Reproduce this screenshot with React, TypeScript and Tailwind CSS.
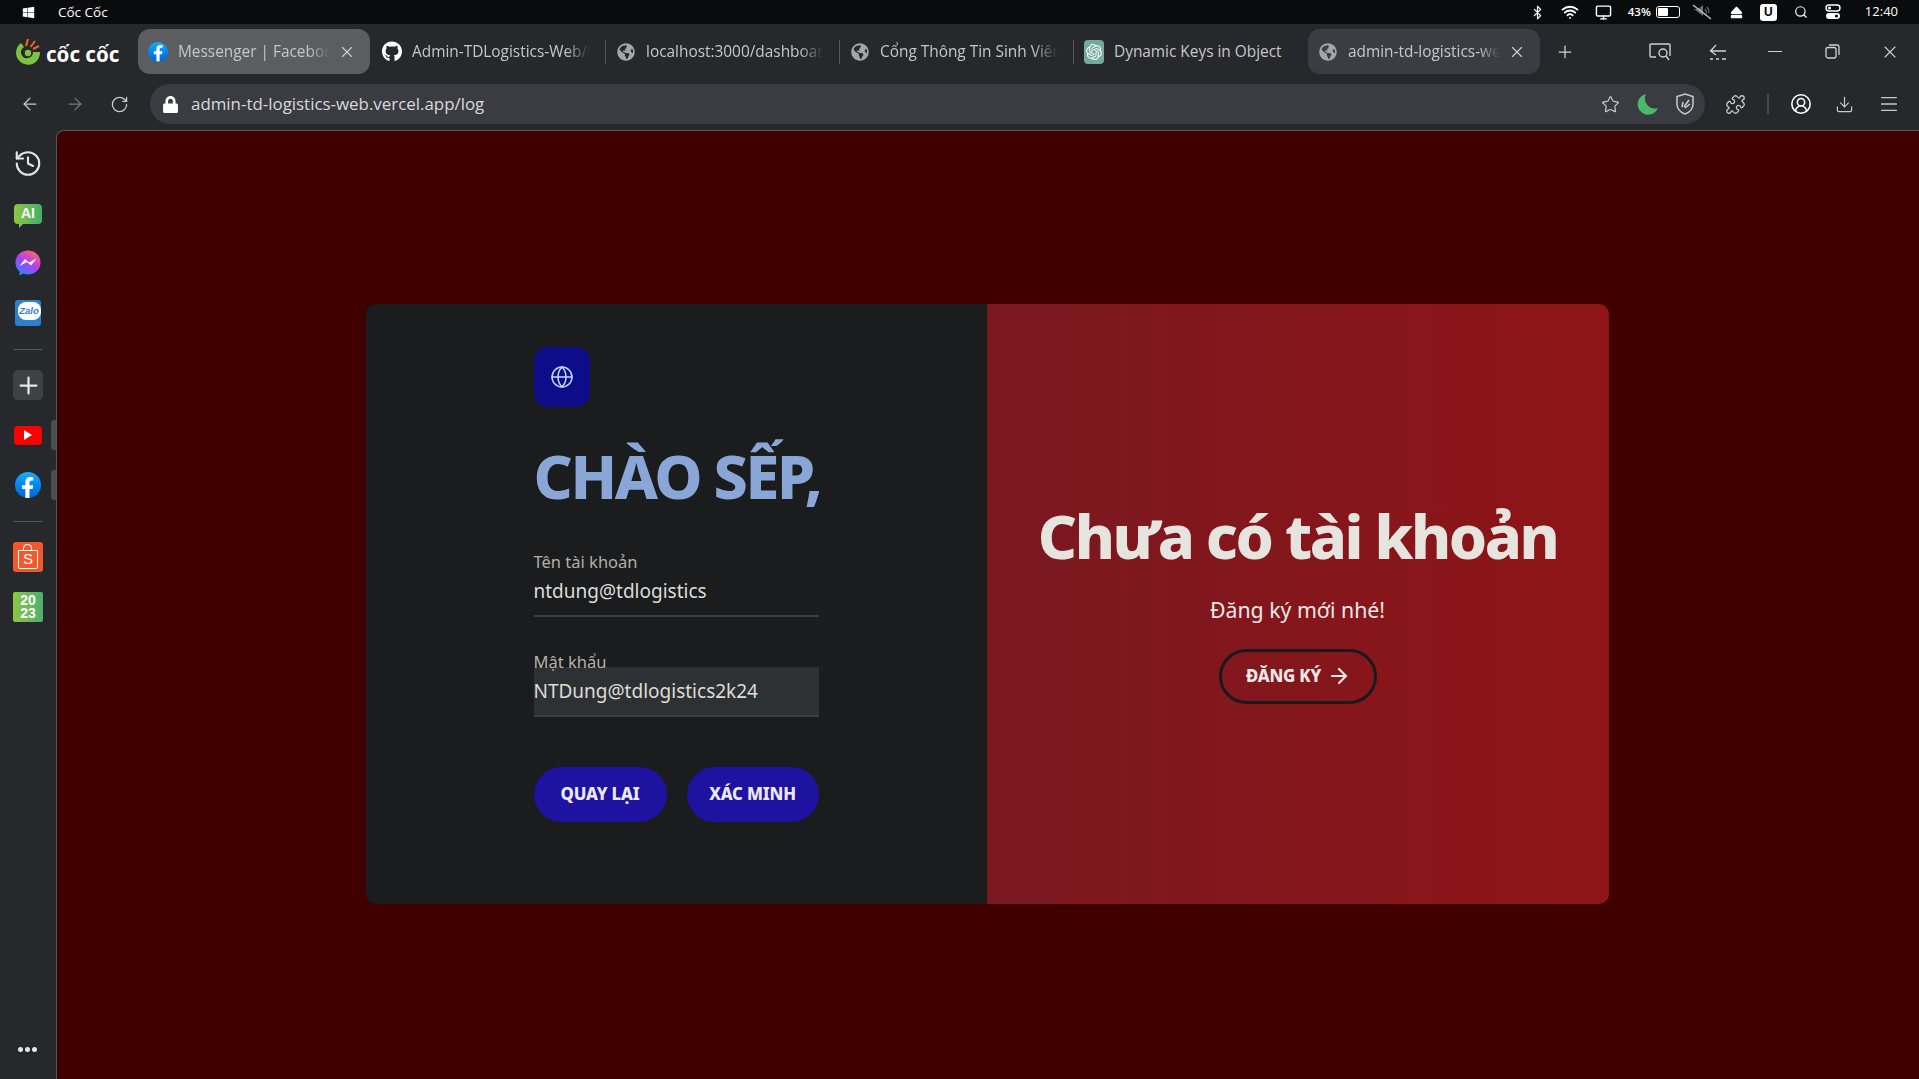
import React from "react";
import { ArrowLeft, ArrowRight, RotateCw, Star, Puzzle, CircleUserRound, Download, Menu, X, Plus, Globe, History, Bluetooth, Wifi, Monitor, Search } from "lucide-react";
import { FaGithub, FaGlobeAmericas, FaLock, FaWindows, FaEject, FaFacebookF } from "react-icons/fa";
import { SiOpenai } from "react-icons/si";

const ui = "font-['Open_Sans',sans-serif]";

function FbIcon({ size = 20 }: { size?: number }) {
  return (
    <span className="flex items-end justify-center rounded-full overflow-hidden bg-gradient-to-b from-[#18acfe] to-[#0163e0] shrink-0" style={{ width: size, height: size }}>
      <FaFacebookF className="text-white" size={size * 0.82} />
    </span>
  );
}

function CocLogo() {
  return (
    <div className="w-[138px] shrink-0 flex items-center pl-[15px] gap-[5px] relative">
      <svg width="26" height="28" viewBox="0 0 26 28">
        <path d="M6 5 A12 12 0 1 0 25 14 L18 14 A6 6 0 1 1 9 9 Z" fill="#7fc241" />
        <circle cx="13" cy="15" r="3.2" fill="#7fc241" />
        <path d="M11 8 L13 1" stroke="#e8672c" strokeWidth="2.2" />
        <path d="M15.5 9 L20 3" stroke="#e8672c" strokeWidth="2" />
        <path d="M18 11 L24 8" stroke="#e8672c" strokeWidth="2" />
      </svg>
      <span className="font-['Noto_Sans',sans-serif] font-bold text-[20.5px] leading-none text-white mt-[6px] whitespace-nowrap">cốc cốc</span>
    </div>
  );
}

function Tab({ icon, title, active, selected, fade, close }: { icon: React.ReactNode; title: string; active?: boolean; selected?: boolean; fade?: boolean; close?: boolean }) {
  const bg = active ? "bg-[#5c5d61]" : selected ? "bg-[#3b3d42]" : "";
  return (
    <div className={`w-[232px] h-[45px] shrink-0 rounded-[12px] flex items-center pl-[10px] pr-[14px] ${bg}`}>
      <span className="w-[20px] h-[20px] flex items-center justify-center shrink-0">{icon}</span>
      <span className={`ml-[10px] flex-1 overflow-hidden whitespace-nowrap text-[15.4px] text-[#c6c7c9] ${ui} ${fade ? "[mask-image:linear-gradient(to_right,black_86%,transparent_100%)]" : ""}`}>{title}</span>
      {close ? <X size={18} strokeWidth={1.5} className="ml-[8px] text-[#d0d1d3] shrink-0" /> : null}
    </div>
  );
}

function TabGap({ line }: { line?: boolean }) {
  return (
    <div className="w-[2px] shrink-0 flex items-center justify-center">
      {line ? <span className="w-[1px] h-[24px] bg-[#55575a]" /> : null}
    </div>
  );
}

function TopBar() {
  return (
    <div className="h-[24px] shrink-0 bg-[#0a0b0c] flex items-center text-white">
      <FaWindows size={13} className="ml-[22px] text-white" />
      <span className={`ml-[23px] text-[13.5px] ${ui}`}>Cốc Cốc</span>
      <div className="ml-auto flex items-center pr-[21px]">
        <span className="w-[33px] flex justify-center"><Bluetooth size={15} strokeWidth={2} /></span>
        <span className="w-[33px] flex justify-center"><Wifi size={18} strokeWidth={2.4} /></span>
        <span className="w-[33px] flex justify-center"><Monitor size={17} strokeWidth={2} /></span>
        <span className={`ml-[8px] text-[11.5px] font-semibold ${ui}`}>43%</span>
        <span className="ml-[5px] w-[24px] h-[12px] rounded-[3px] border border-white flex p-[1px]">
          <span className="w-[10px] h-full bg-white rounded-[1px]" />
        </span>
        <span className="w-[44px] flex justify-center">
          <svg width="20" height="16" viewBox="0 0 20 16">
            <path d="M2 5 H6 L11 1 V12 Z" fill="#6c6d6f" />
            <path d="M13 5 A5 5 0 0 1 14 10 M15 3 A8 8 0 0 1 17 9" stroke="#6c6d6f" strokeWidth="1.2" fill="none" />
            <path d="M1 1 L19 15" stroke="#c9cacb" strokeWidth="1.2" />
          </svg>
        </span>
        <span className="w-[26px] flex justify-center"><FaEject size={13} /></span>
        <span className="ml-[10px] w-[17px] h-[17px] rounded-[3px] bg-white text-black text-[12px] font-bold flex items-center justify-center font-['Liberation_Sans',sans-serif]">U</span>
        <span className="w-[48px] flex justify-center"><Search size={14} strokeWidth={2} /></span>
        <svg width="16" height="16" viewBox="0 0 16 16">
          <rect x="1" y="1" width="14" height="6" rx="3" fill="none" stroke="white" strokeWidth="1.4" />
          <circle cx="4.5" cy="4" r="1.6" fill="white" />
          <rect x="1" y="9" width="14" height="6" rx="3" fill="white" />
          <circle cx="11.5" cy="12" r="1.6" fill="#0a0b0c" />
        </svg>
        <span className={`ml-[24px] text-[13px] ${ui}`}>12:40</span>
      </div>
    </div>
  );
}

function TabStrip() {
  const globe = <FaGlobeAmericas size={18} className="text-[#a4a6a9]" />;
  const cell = "w-[57.5px] flex justify-center shrink-0";
  return (
    <div className="h-[60px] shrink-0 bg-[#26282b] flex items-center pb-[5px]">
      <CocLogo />
      <Tab active fade close icon={<FbIcon />} title="Messenger | Facebook" />
      <TabGap />
      <Tab fade icon={<FaGithub size={21} className="text-white" />} title="Admin-TDLogistics-Web/Client" />
      <TabGap line />
      <Tab fade icon={globe} title="localhost:3000/dashboard/main" />
      <TabGap line />
      <Tab fade icon={globe} title="Cổng Thông Tin Sinh Viên" />
      <TabGap line />
      <Tab
        icon={
          <span className="w-[20px] h-[24px] rounded-[4px] bg-[#74aa9c] flex items-center justify-center">
            <SiOpenai size={16} className="text-white" />
          </span>
        }
        title="Dynamic Keys in Object"
      />
      <TabGap />
      <Tab selected fade close icon={globe} title="admin-td-logistics-web" />
      <Plus size={20} strokeWidth={1.5} className="ml-[15px] text-[#d0d1d3]" />
      <div className="ml-auto flex items-center text-[#d0d1d3]">
        <span className={cell}>
          <svg width="22" height="20" viewBox="0 0 22 20" fill="none" stroke="currentColor" strokeWidth="1.4">
            <path d="M7 15 H2 a1 1 0 0 1 -1 -1 V3 a1 1 0 0 1 1 -1 H20 a1 1 0 0 1 1 1 V14" />
            <circle cx="14" cy="11" r="4" />
            <path d="M17 14 L20 18" />
          </svg>
        </span>
        <span className={cell}>
          <svg width="18" height="18" viewBox="0 0 18 18" fill="none" stroke="currentColor" strokeWidth="1.3">
            <path d="M17 8 H2 M7 2 L1.5 8 L7 12" />
            <path d="M1 16 H4 M7 16 H10 M13 16 H17" />
          </svg>
        </span>
        <span className={cell}><span className="w-[14px] h-[1.5px] bg-current" /></span>
        <span className={cell}>
          <svg width="15" height="15" viewBox="0 0 15 15" fill="none" stroke="currentColor" strokeWidth="1.3">
            <rect x="1" y="3.5" width="10" height="10.5" rx="2" />
            <path d="M4 1 H12 a2 2 0 0 1 2 2 V11" />
          </svg>
        </span>
        <span className={cell}><X size={20} strokeWidth={1.3} /></span>
      </div>
    </div>
  );
}

function Toolbar() {
  return (
    <div className="h-[46px] shrink-0 bg-[#26282b] flex items-start text-[#c9cacc]">
      <div className="w-[150px] shrink-0 h-[40px] flex items-center">
        <ArrowLeft size={20} strokeWidth={1.5} className="ml-[20px]" />
        <ArrowRight size={20} strokeWidth={1.5} className="ml-[25px] text-[#77797c]" />
        <RotateCw size={19} strokeWidth={1.6} className="ml-[25px]" />
      </div>
      <div className="w-[1555px] h-[40px] rounded-[20px] bg-[#3a3c41] flex items-center shrink-0">
        <FaLock size={17} className="ml-[12px] text-white" />
        <span className={`ml-[12px] text-[16.9px] text-[#d8d9db] ${ui}`}>admin-td-logistics-web.vercel.app/log</span>
        <div className="ml-auto flex items-center">
          <Star size={19} strokeWidth={1.5} />
          <svg width="22" height="22" viewBox="0 0 22 22" className="ml-[17px]">
            <path d="M9 1 A10.5 10.5 0 1 0 21 15 A10 10 0 0 1 9 1 Z" fill="#4cb96a" />
          </svg>
          <svg width="18" height="22" viewBox="0 0 18 22" fill="none" stroke="currentColor" strokeWidth="1.5" className="ml-[17px] mr-[11px]">
            <path d="M9 1 L17 3.5 V11 C17 16 13 19.5 9 21 C5 19.5 1 16 1 11 V3.5 Z" />
            <path d="M6 14 L7 9 M8 14 L13 7 M9 15 L14 11" strokeWidth="1.6" />
          </svg>
        </div>
      </div>
      <div className="flex-1 h-[40px] flex items-center">
        <Puzzle size={21} strokeWidth={1.5} className="ml-[20px]" />
        <span className="ml-[21px] w-[2px] h-[20px] bg-[#48494c]" />
        <CircleUserRound size={22} strokeWidth={1.7} className="ml-[21px] text-white" />
        <Download size={19} strokeWidth={1.5} className="ml-[23px]" />
        <Menu size={22} strokeWidth={1.5} className="ml-[24px]" />
      </div>
    </div>
  );
}

function Slot({ children, side }: { children: React.ReactNode; side?: boolean }) {
  return (
    <div className="h-[50px] shrink-0 flex items-center pl-[13px] relative">
      <div className="w-[30px] flex items-center justify-center">{children}</div>
      {side ? <span className="absolute right-0 top-[10px] w-[5px] h-[30px] rounded-l-[3px] bg-[#4b4d50]" /> : null}
    </div>
  );
}

function Divider() {
  return (
    <div className="h-[22px] shrink-0 flex items-center pl-[13px]">
      <span className="w-[30px] h-[1px] bg-[#55575a]" />
    </div>
  );
}

function Sidebar() {
  return (
    <div className="w-[56px] shrink-0 bg-[#26282b] flex flex-col pt-[8px] pb-[27px]">
      <Slot><History size={31} strokeWidth={1.7} className="text-[#e4e4e4]" /></Slot>
      <Slot>
        <span className="relative w-[28px] h-[20px] rounded-[4px] bg-gradient-to-r from-[#8cc63f] to-[#3fae6a] flex items-center justify-center text-white text-[14px] font-bold font-['Liberation_Sans',sans-serif] mt-[1px]">
          AI
          <span className="absolute left-[5px] -bottom-[4px] w-0 h-0 border-t-[5px] border-t-[#7fc048] border-r-[5px] border-r-transparent" />
        </span>
      </Slot>
      <Slot>
        <svg width="26" height="26" viewBox="0 0 26 26">
          <defs>
            <linearGradient id="ms" x1="0.2" y1="1" x2="0.8" y2="0">
              <stop offset="0" stopColor="#1f8bff" />
              <stop offset="0.5" stopColor="#b43cf5" />
              <stop offset="1" stopColor="#ff6a60" />
            </linearGradient>
          </defs>
          <path d="M13 0.5 C6 0.5 0.5 5.6 0.5 12.5 C0.5 16.2 2 19.3 4.5 21.5 L4.5 25.5 L8.4 23.5 C9.8 24 11.4 24.4 13 24.4 C20 24.4 25.5 19.3 25.5 12.5 C25.5 5.6 20 0.5 13 0.5 Z" fill="url(#ms)" />
          <path d="M4.5 16 L10 9 L14 12.5 L21.5 8.5 L16 15.5 L12 12 Z" fill="white" />
        </svg>
      </Slot>
      <Slot>
        <span className="w-[26px] h-[26px] rounded-[3px] bg-[#2f80cf] relative flex items-center justify-center overflow-hidden">
          <span className="absolute left-[3px] top-[2px] w-[23px] h-[18px] rounded-[8px] bg-white" />
          <span className="relative text-[#2f80cf] text-[9.5px] font-bold italic -mt-[4px] ml-[2px] font-['Liberation_Sans',sans-serif]">Zalo</span>
        </span>
      </Slot>
      <Divider />
      <Slot>
        <span className="w-[30px] h-[30px] rounded-[5px] bg-[#3f4144] flex items-center justify-center">
          <Plus size={27} strokeWidth={2} className="text-[#e6e6e6]" />
        </span>
      </Slot>
      <Slot side>
        <span className="w-[28px] h-[19px] rounded-[4px] bg-[#ff0000] flex items-center justify-center">
          <span className="w-0 h-0 border-y-[5px] border-y-transparent border-l-[8px] border-l-white" />
        </span>
      </Slot>
      <Slot side><FbIcon size={26} /></Slot>
      <Divider />
      <Slot>
        <span className="w-[30px] h-[30px] rounded-[3px] bg-[#f1582c] flex items-center justify-center">
          <span className="relative w-[20px] h-[19px] mt-[5px] rounded-b-[2px] border-[1.5px] border-white flex items-center justify-center text-white text-[15px] font-['Liberation_Sans',sans-serif]">
            S
            <span className="absolute -top-[7px] left-[4px] w-[9px] h-[7px] rounded-t-full border-[1.5px] border-b-0 border-white" />
          </span>
        </span>
      </Slot>
      <Slot>
        <span className="w-[30px] h-[30px] rounded-[2px] bg-gradient-to-r from-[#8cc63f] to-[#47b06b] flex flex-col items-center justify-center text-white text-[14px] leading-[13px] font-bold font-['Liberation_Sans',sans-serif]">
          <span>20</span>
          <span>23</span>
        </span>
      </Slot>
      <div className="mt-auto flex justify-center gap-[2px] pr-[1px]">
        <span className="w-[5px] h-[5px] rounded-full bg-[#e6e6e6]" />
        <span className="w-[5px] h-[5px] rounded-full bg-[#e6e6e6]" />
        <span className="w-[5px] h-[5px] rounded-full bg-[#e6e6e6]" />
      </div>
    </div>
  );
}

function Field({ label, value, filled }: { label: string; value: string; filled?: boolean }) {
  return (
    <div>
      <div className="relative z-10 text-[16.5px] leading-[24px] text-[#b5b0a6]">{label}</div>
      <div className={`-mt-[7px] h-[50px] pt-[2px] border-b-2 border-[#3b4143] flex items-center text-[19px] text-[#dfdcd6] ${filled ? "bg-[#2d3133]" : ""}`}>
        {value}
      </div>
    </div>
  );
}

function Card() {
  return (
    <div className="w-[1243px] h-[600px] rounded-[10px] overflow-hidden flex font-['Noto_Sans',sans-serif]">
      <div className="w-[621px] shrink-0 bg-[#1a1c1e] pt-[43px] flex justify-center">
        <div className="w-[285px] flex flex-col">
          <div className="w-[56px] h-[60px] rounded-[14px] bg-[#0d0d8a] flex items-center justify-center">
            <Globe size={24} strokeWidth={1.5} className="text-[#c7d7fb]" />
          </div>
          <h1 className="mt-[33px] text-[61px] leading-[72px] font-extrabold tracking-[-0.04em] text-[#8aa6d6] whitespace-nowrap">CHÀO SẾP,</h1>
          <div className="mt-[38px] flex flex-col gap-[33px]">
            <Field label="Tên tài khoản" value="ntdung@tdlogistics" />
            <Field label="Mật khẩu" value="NTDung@tdlogistics2k24" filled />
          </div>
          <div className="mt-[50px] flex justify-between">
            <button className="w-[133px] h-[55px] rounded-full bg-[#1e12a0] text-[16.8px] font-extrabold tracking-[-0.01em] text-[#ece9f5]">QUAY LẠI</button>
            <button className="w-[132px] h-[55px] rounded-full bg-[#1e12a0] text-[16.8px] font-extrabold tracking-[-0.01em] text-[#ece9f5]">XÁC MINH</button>
          </div>
        </div>
      </div>
      <div className="flex-1 bg-gradient-to-r from-[#7a1820] to-[#8e1416] flex flex-col items-center pt-[196px]">
        <h2 className="text-[61px] leading-[72px] font-extrabold tracking-[-0.04em] text-[#e6e4df] whitespace-nowrap">Chưa có tài khoản</h2>
        <p className="mt-[24px] text-[21.3px] leading-[28px] text-[#ece8e8]">Đăng ký mới nhé!</p>
        <button className="mt-[25px] w-[158px] h-[55px] pl-[2px] rounded-full border-[3px] border-[#1a1a1e] flex items-center justify-center gap-[6px] text-[16.8px] font-extrabold tracking-[-0.01em] text-[#ece8e8]">
          ĐĂNG KÝ
          <ArrowRight size={24} strokeWidth={2.2} />
        </button>
      </div>
    </div>
  );
}

export default function App() {
  return (
    <div className="w-[1919px] h-[1079px] overflow-hidden flex flex-col bg-[#26282b]">
      <TopBar />
      <TabStrip />
      <Toolbar />
      <div className="flex-1 flex min-h-0">
        <Sidebar />
        <main className="flex-1 rounded-tl-[8px] border-l border-t border-[#55575a] bg-[#400000] flex items-center justify-center pr-[2px] pb-[3px]">
          <Card />
        </main>
      </div>
    </div>
  );
}
